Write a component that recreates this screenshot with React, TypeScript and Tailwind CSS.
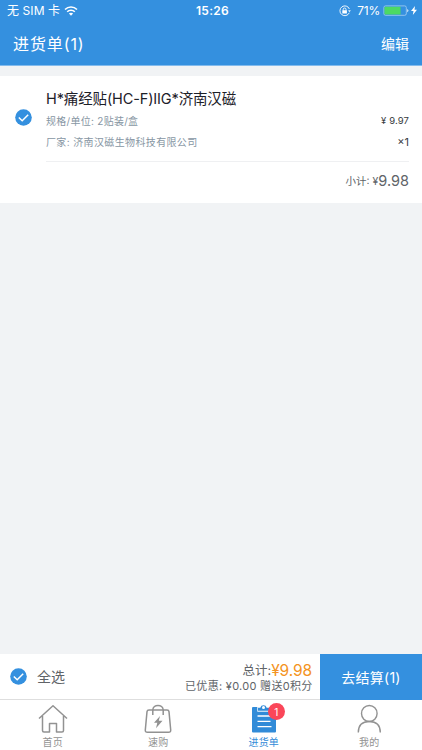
import React from "react";

function Check() {
  return (
    <svg className="block h-[17px] w-[17px] shrink-0" viewBox="0 0 17 17" fill="none">
      <circle cx="8.5" cy="8.5" r="8.3" fill="#3490df" />
      <path d="M3.8 8.5 7.2 11.8 13.2 5.7" stroke="#fff" strokeWidth="1.5" />
    </svg>
  );
}

function StatusBar() {
  return (
    <div className="grid h-[22px] grid-cols-3 items-center text-[12px] leading-[22px]">
      <div className="flex items-center pl-[7px]">
        <span className="whitespace-nowrap tracking-[0.1px]">无 SIM 卡</span>
        <svg className="ml-[4px] h-[10px] w-[14px]" viewBox="0 0 14 10" fill="none" stroke="#fff" strokeWidth="1.6">
          <path d="M1 3.5C4.4.1 9.6.1 13 3.5" />
          <path d="M3.2 5.8c2.1-2.1 5.5-2.1 7.6 0" />
          <path d="M7 9.8 4.9 7.6c1.1-1.1 3.1-1.1 4.2 0z" fill="#fff" stroke="none" />
        </svg>
      </div>
      <div className="text-center text-[12px] font-semibold tracking-[0.3px]">
        <span className="relative left-[1.5px]">15:26</span>
      </div>
      <div className="flex items-center justify-end pr-[5px]">
        <svg className="mr-[6px] h-[12px] w-[12px]" viewBox="0 0 12 12" fill="none" stroke="#fff" strokeWidth="0.9">
          <path d="M10.3 7.8A4.9 4.9 0 1 1 10.4 4" />
          <path d="m9 5.4 1.6 1.5 1.2-1.7z" fill="#fff" stroke="none" />
          <path d="M4.2 5.6V4.4a1.4 1.4 0 0 1 2.8 0v1.2" />
          <rect x="3.3" y="5.2" width="4.6" height="3.4" rx="0.4" fill="#fff" stroke="none" />
        </svg>
        <span className="tracking-[-0.2px]">71%</span>
        <svg className="mb-[1px] ml-[3px] h-[11px] w-[26px]" viewBox="0 0 26 11" fill="none">
          <rect x="0.9" y="0.9" width="22.4" height="9.4" rx="1.6" stroke="#a8d0f3" strokeWidth="0.8" />
          <path d="M2.3 1.7H17.5v7.8H2.3a.8.8 0 0 1-.8-.8V2.5a.8.8 0 0 1 .8-.8z" fill="#4cd964" />
          <path d="M24.2 4v3.2c.8-.3 1.2-.9 1.2-1.6S25 4.300 24.200 4z" fill="#d5e9f9" />
        </svg>
        <svg className="mb-[1px] ml-[2px] h-[9px] w-[6px]" viewBox="0 0 6 9" fill="#fff">
          <path d="M4 0 0 5h2.500L1.800 9 6 3.700H3.500z" />
        </svg>
      </div>
    </div>
  );
}

function Tab({ label, active, children }: { label: string; active?: boolean; children: React.ReactNode }) {
  return (
    <div className={"flex flex-col items-center pt-[4px] " + (active ? "text-[#318bd8]" : "text-[#929292]")}>
      <div className="relative h-[30px] w-[30px]">{children}</div>
      <span className="text-[10px] leading-[16px] tracking-[0.2px]">{label}</span>
    </div>
  );
}

export default function App() {
  return (
    <div className="flex h-[750px] w-[422px] flex-col overflow-hidden bg-[#f1f3f5] font-[Inter,'Noto_Sans_CJK_SC',sans-serif] text-[#606468]">
      <header className="h-[66px] shrink-0 border-b border-[#83bbed] bg-[#3490df] text-white">
        <StatusBar />
        <div className="flex h-[43px] items-center justify-between pl-[13px] pr-[13px]">
          <h1 className="text-[16px] font-normal tracking-[0.9px]">进货单(1)</h1>
          <span className="relative top-[-0.5px] text-[14px]">编辑</span>
        </div>
      </header>

      <section className="mt-[10px] flex h-[127px] shrink-0 bg-white">
        <div className="w-[46px] shrink-0 pl-[15px] pt-[33px]">
          <Check />
        </div>
        <div className="mr-[13px] flex flex-1 flex-col">
          <h2 className="mt-[12px] whitespace-nowrap text-[14.500px] leading-[22px] tracking-[-0.13px] text-[#1c2028]">H*痛经贴(HC-F)IIG*济南汉磁</h2>
          <div className="mt-[1px] flex h-[21px] items-center justify-between">
            <span className="text-[10px] tracking-[0.280px] text-[#8796a3]">规格/单位: 2贴装/盒</span>
            <span className="text-[9.500px] tracking-[0.1px] text-[#383c42]">¥ 9.97</span>
          </div>
          <div className="flex h-[21px] items-center justify-between">
            <span className="text-[10px] tracking-[0.370px] text-[#8796a3]">厂家: 济南汉磁生物科技有限公司</span>
            <span className="text-[11px] text-[#383c42]">×1</span>
          </div>
          <div className="mt-[8px] flex h-[38px] items-center justify-end border-t border-[#eff0f2]">
            <span className="relative top-[1px] text-[10.500px]">小计: ¥</span>
            <span className="text-[14.500px]">9.98</span>
          </div>
        </div>
      </section>

      <section className="mt-auto flex h-[46px] shrink-0 bg-white">
        <div className="flex flex-1 items-center border-b border-[#dedede] pl-[10px]">
          <Check />
          <span className="ml-[10px] text-[14px]">全选</span>
          <div className="ml-auto mr-[8px] pt-[2px] text-right">
            <div className="flex items-center justify-end leading-[17px]">
              <span className="text-[12.500px]">总计:</span>
              <span className="text-[15.500px] tracking-[-0.1px] text-[#f49322]">¥9.98</span>
            </div>
            <div className="-mr-[0.5px] whitespace-nowrap text-[11px] leading-[14px] tracking-[0.290px]">已优惠: ¥0.00 赠送0积分</div>
          </div>
        </div>
        <button className="w-[102px] bg-[#3490df] text-[14px] tracking-[0.250px] text-white">去结算(1)</button>
      </section>

      <nav className="grid h-[50px] shrink-0 grid-cols-4 bg-white">
        <Tab label="首页">
          <svg className="h-[30px] w-[30px]" viewBox="0 0 30 30" fill="none" stroke="currentColor" strokeWidth="1.5" strokeLinejoin="round">
            <path d="M1 14.500 15 1.800 29 14.500M4.500 12v14.500q0 1.500 1.500 1.500h5.500v-8.500h7V28H24q1.500 0 1.500-1.500V12" />
          </svg>
        </Tab>
        <Tab label="速购">
          <svg className="h-[30px] w-[30px]" viewBox="0 0 30 30" fill="none" stroke="currentColor" strokeWidth="1.5">
            <path d="M6 6h18q1.800 0 2 1.600l1.700 18.400q.2 2.300-2.200 2.300h-21q-2.400 0-2.200-2.300L4 7.600Q4.200 6 6 6z" />
            <path d="M9.800 11V6.200C9.800-.2 20.200-.2 20.200 6.200V11" />
            <path d="m17 12-6 6.700h3.300l-1.300 5.500 6.500-7.400h-3.700z" fill="currentColor" stroke="none" />
          </svg>
        </Tab>
        <Tab label="进货单" active>
          <svg className="h-[30px] w-[30px]" viewBox="0 0 30 30" fill="none">
            <rect x="3" y="3" width="24" height="25.500" rx="1" fill="currentColor" />
            <path d="M8.300 2.500v5.200h12.400V2.500z" fill="#fff" />
            <path d="M9 3.700h2.300a3.300 3.300 0 0 1 6.400 0H20v3H9z" fill="currentColor" />
            <circle cx="14.500" cy="3.400" r="1.500" fill="#fff" />
            <path d="M8.500 12h13M8.500 17.300h13M8.500 22.700h14" stroke="#fff" strokeWidth="1.300" />
          </svg>
          <span className="absolute left-[19px] top-[-1px] flex h-[17px] w-[17px] items-center justify-center rounded-full bg-[#fa4659] pt-px text-[10px] leading-[16px] text-white">1</span>
        </Tab>
        <Tab label="我的">
          <svg className="h-[30px] w-[30px]" viewBox="0 0 30 30" fill="none" stroke="currentColor" strokeWidth="1.4">
            <ellipse cx="15.300" cy="9.500" rx="7.800" ry="8" />
            <path d="M4.300 28.500c0-7.300 4-11 11-11s11 3.700 11 11" />
          </svg>
        </Tab>
      </nav>
    </div>
  );
}
